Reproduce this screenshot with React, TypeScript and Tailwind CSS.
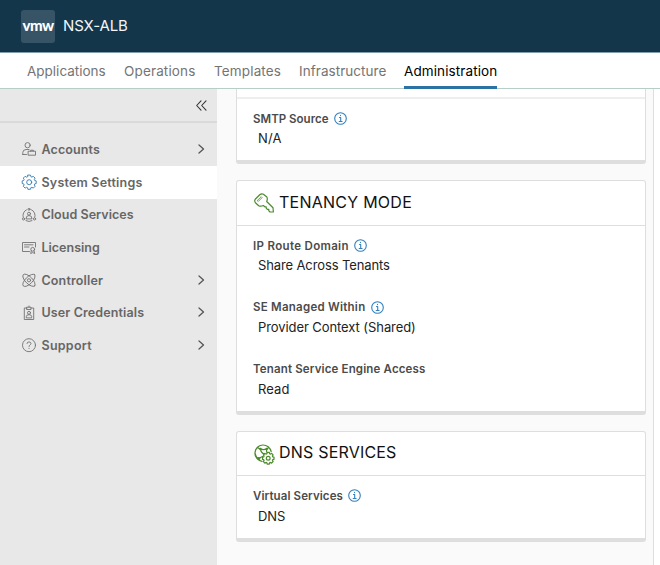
import React from "react";

type IconName = "user" | "gear" | "cloud" | "license" | "atom" | "badge" | "help";

const iconProps = {
  fill: "none",
  stroke: "currentColor",
  strokeLinecap: "round" as const,
  strokeLinejoin: "round" as const,
};

const gearPath =
  "M5.7 .9h2.6l.4 1.6 1 .4 1.4-.8 1.8 1.8-.8 1.4.4 1 1.5.4v2.6l-1.5.4-.4 1 .8 1.4-1.8 1.8-1.4-.8-1 .4-.4 1.6H5.7l-.4-1.6-1-.4-1.4.8-1.8-1.8.8-1.4-.4-1L0 9.3V6.7l1.5-.4.4-1-.8-1.4 1.8-1.8 1.4.8 1-.4z";

function SideIcon({ name }: { name: IconName }) {
  return (
    <svg
      viewBox="0 0 14 14"
      className={"h-3.5 w-3.5 shrink-0 overflow-visible " + (name === "gear" ? "mb-[0.5px] text-[#3078b0]" : "mb-[0.5px] text-[#727272]")}
      {...iconProps}
      strokeWidth={0.9}
    >
      {name === "user" && (
        <>
          <circle cx="5.6" cy="3.2" r="2.6" />
          <path d="M.8 12.500V10.500Q.8 7.800 4 7.500H7M.8 12.500H4.500M6.500 9.200H13.500V13.200H6.500ZM8.700 9.200V8.200H11.300V9.200" />
        </>
      )}
      {name === "gear" && (
        <>
          <path transform="translate(.2 -.8)" d={gearPath} />
          <circle cx="7.2" cy="7.2" r="2.5" />
        </>
      )}
      {name === "cloud" && (
        <>
          <path d="M4.500 1.800A6 6 0 0 0 1.200 9.200M9.500 1.800A6 6 0 0 1 12.800 9.200M4 12.700Q7 14.300 10 12.700" />
          <circle cx="7" cy="1.300" r="1" />
          <circle cx="1.500" cy="10.900" r="1.100" />
          <circle cx="12.500" cy="10.900" r="1.100" />
          <circle cx="7" cy="5.700" r="1.500" />
          <path d="M4 10.500Q4 7.500 7 7.500T10 10.500Z" />
        </>
      )}
      {name === "license" && (
        <>
          <path d="M7.500 11.500H.5V2.500H13.500V7M2.500 4.800H11M2.500 7H7M9.300 10.800 8.700 13.500 10.700 12.600 12.700 13.500 12.100 10.800" />
          <circle cx="10.700" cy="9.300" r="1.900" />
        </>
      )}
      {name === "atom" && (
        <>
          <ellipse cx="7" cy="7.300" rx="8" ry="3.500" transform="rotate(45 7 7.300)" />
          <ellipse cx="7" cy="7.300" rx="8" ry="3.500" transform="rotate(-45 7 7.300)" />
          <circle cx="7" cy="7.300" r="1.600" />
        </>
      )}
      {name === "badge" && (
        <>
          <path d="M5 2H2.300V13.500H11.700V2H9M5 1.200H9V3.500H5ZM7 0V1M4.300 11.500V10.500Q4.300 8.700 7 8.700T9.700 10.500V11.500Z" />
          <circle cx="7" cy="6.800" r="1.500" />
        </>
      )}
      {name === "help" && (
        <>
          <circle cx="7" cy="7.200" r="6.500" />
          <path d="M5 5.500Q5.100 3.900 7 3.900T9 5.500C9 7 7 6.800 7 8.500M7 10.300V10.500" />
        </>
      )}
    </svg>
  );
}

function InfoIcon() {
  return (
    <svg viewBox="0 0 13 13" className="mb-[2px] ml-[5.5px] h-[13px] w-[13px] shrink-0 overflow-visible text-[#3280bd]" {...iconProps}>
      <circle cx="6.5" cy="6.5" r="5.8" strokeWidth="1.1" />
      <path d="M5.5 5.5H6.7V9.5M5.2 9.5H8.1M6.5 3.3V3.6" strokeWidth="1.1" />
    </svg>
  );
}

function KeyIcon() {
  return (
    <svg viewBox="0 0 20 20" className="h-5 w-5 shrink-0 text-[#4c8b2b]" {...iconProps} strokeWidth="1.2">
      <path d="M1.200 6.200 5.700 1.800Q7.500.3 9.400 1.200L12.600 3.700Q14 5.500 12.700 8.500L19 14.700 19.400 19H16L14.800 17.800V16.300H13.300L12.200 15.200V13.800H10.800L9.300 12.500Q6.800 13.800 4.700 12.700L1.400 9.700Q.1 8 1.200 6.200Z" />
      <path d="M3.500 7.300 7.200 3.700 8.100 4.600 4.500 8.200Z" strokeWidth=".8" />
    </svg>
  );
}

function DnsIcon() {
  return (
    <svg viewBox="0 0 20 20" className="h-5 w-5 shrink-0 overflow-visible text-[#4c8b2b]" {...iconProps} strokeWidth="1.200">
      <path d="M8 17.300A8.200 8.200 0 1 1 17.200 7.700M3.200 3.500 6.500 5.100Q9.500 6 12.500 5.100L15 3.500M6.500 5.100Q7 9 10.500 10M12.500 5.100Q12.700 7 12.500 8M1.300 9.500Q2 14 5 14.300L8.500 12.500" />
      <circle cx="6.500" cy="5" r=".7" fill="currentColor" />
      <circle cx="12.600" cy="5" r=".7" fill="currentColor" />
      <circle cx="4.800" cy="14.500" r="1" fill="currentColor" />
      <path transform="translate(8.500 7.700) scale(.82)" strokeWidth="1.500" d={gearPath} />
      <circle cx="14.200" cy="14.250" r="1.900" />
    </svg>
  );
}

const tabs = [
  { label: "Applications", box: "ml-[27px] w-[79px]" },
  { label: "Operations", box: "ml-[18px] w-[72px] tracking-[0.15px]" },
  { label: "Templates", box: "ml-[18px] w-[67px] tracking-[0.15px]" },
  { label: "Infrastructure", box: "ml-[18px] w-[87px] tracking-[0.05px]" },
  { label: "Administration", box: "ml-[18px] w-[93px] tracking-[0.1px]" },
];

const items: { label: string; icon: IconName; chevron?: boolean; tracking: string }[] = [
  { label: "Accounts", icon: "user", chevron: true, tracking: "tracking-[0.1px]" },
  { label: "System Settings", icon: "gear", tracking: "tracking-[0.2px]" },
  { label: "Cloud Services", icon: "cloud", tracking: "tracking-[0.05px]" },
  { label: "Licensing", icon: "license", tracking: "tracking-[0px]" },
  { label: "Controller", icon: "atom", chevron: true, tracking: "tracking-[0.15px]" },
  { label: "User Credentials", icon: "badge", chevron: true, tracking: "tracking-[0.12px]" },
  { label: "Support", icon: "help", chevron: true, tracking: "tracking-[0.25px]" },
];

function Field({ label, value, info, labelClass, valueClass }: {
  label: string;
  value: string;
  info?: boolean;
  labelClass: string;
  valueClass: string;
}) {
  return (
    <div className="h-[61.6px] whitespace-nowrap pl-4">
      <div className="flex h-5 items-center pt-px">
        <span className={"text-[11.5px] font-semibold text-[#4b4b4b] " + labelClass}>{label}</span>
        {info && <InfoIcon />}
      </div>
      <div className={"h-5 pl-[5px] text-[13px] text-[#222] " + valueClass}>{value}</div>
    </div>
  );
}

const cardClass = "w-[410px] shrink-0 rounded-[3px] border border-b-[4px] border-[#dedede] bg-white";

export default function App() {
  return (
    <div className="flex h-[565px] w-[660px] flex-col overflow-hidden bg-[#fafafa] font-['Inter',sans-serif]">
      <header className="flex h-[53px] shrink-0 items-center border-b border-[#819caa] bg-[#13364b] pl-[21px]">
        <div className="flex h-[33px] w-[34px] items-center justify-center rounded-[3px] bg-[#375466] pb-[2px] font-['Lato',sans-serif] text-[15px] font-black tracking-[-0.6px] text-white">
          vmw
        </div>
        <span className="ml-2 text-[15px] tracking-[-0.1px] text-[#f2f5f7]">NSX-ALB</span>
      </header>
      <nav className="flex h-9 shrink-0 whitespace-nowrap border-b border-[#b5cec7] bg-white text-[13.5px]">
        {tabs.map((tab, index) => (
          <div
            key={tab.label}
            className={
              "h-9 shrink-0 pt-2 leading-5 " + tab.box +
              (index === 4 ? " border-b-[3px] border-[#2c72a4] text-black" : " text-[#747474]")
            }
          >
            {tab.label}
          </div>
        ))}
      </nav>
      <div className="flex min-h-0 flex-1">
        <aside className="w-[217px] shrink-0 bg-[#e8e8e8]">
          <div className="flex h-[34px] items-center justify-end border-b-2 border-[#dadada] pr-[10px]">
            <svg viewBox="0 0 11 11" className="h-[11px] w-[11px] text-[#333]" {...iconProps} strokeWidth="1.1">
              <path d="M5 .8.7 5.5 5 10.2M10 .8 5.7 5.5 10 10.2" />
            </svg>
          </div>
          <div className="pt-[10.3px]">
            {items.map((item, index) => (
              <div
                key={item.label}
                className={"flex h-[32.67px] items-center pl-[22px] pr-3 text-[#666] " + (index === 1 ? "bg-white" : "")}
              >
                <SideIcon name={item.icon} />
                <span className={"ml-[5.5px] flex-1 whitespace-nowrap pt-[1.6px] text-[12.5px] font-semibold " + item.tracking}>
                  {item.label}
                </span>
                {item.chevron && (
                  <svg viewBox="0 0 8 10" className="mb-px h-[10px] w-2 text-[#555]" {...iconProps} strokeWidth="1.3">
                    <path d="M2 1 6.5 5 2 9" />
                  </svg>
                )}
              </div>
            ))}
          </div>
        </aside>
        <main className="flex w-[437px] shrink-0 flex-col gap-4 overflow-hidden border-r border-[#dedede] pl-[19px]">
          <section className={cardClass + " h-[75px] rounded-t-none border-t-0"}>
            <div className="mb-[10px] h-[10px] border-b-2 border-[#eeeeee]" />
            <Field label="SMTP Source" value="N/A" info labelClass="tracking-[0.02px]" valueClass="leading-[19px] tracking-[0.2px]" />
          </section>
          <section className={cardClass + " h-[235px]"}>
            <div className="flex h-[45px] items-center border-b border-[#dedede] pl-[17px]">
              <KeyIcon />
              <h2 className="ml-[5px] pb-[3px] text-[16px] tracking-[0.25px] text-[#111]">TENANCY MODE</h2>
            </div>
            <div className="pt-[10px]">
              <Field label="IP Route Domain" value="Share Across Tenants" info labelClass="tracking-[0.33px]" valueClass="leading-[19px] tracking-[-0.12px]" />
              <Field label="SE Managed Within" value="Provider Context (Shared)" info labelClass="tracking-[0.25px]" valueClass="leading-[19px] tracking-[-0.08px]" />
              <Field label="Tenant Service Engine Access" value="Read" labelClass="tracking-[0.15px]" valueClass="leading-[20px] tracking-[0.1px]" />
            </div>
          </section>
          <section className={cardClass + " h-[111px]"}>
            <div className="flex h-[44px] items-center border-b border-[#dedede] pl-[17px]">
              <DnsIcon />
              <h2 className="ml-[5px] pb-[4px] text-[16px] tracking-[0.2px] text-[#111]">DNS SERVICES</h2>
            </div>
            <div className="pt-[10px]">
              <Field label="Virtual Services" value="DNS" info labelClass="tracking-[0.1px]" valueClass="leading-[21px] tracking-[-0.1px]" />
            </div>
          </section>
        </main>
        <div className="flex-1 bg-white" />
      </div>
    </div>
  );
}
